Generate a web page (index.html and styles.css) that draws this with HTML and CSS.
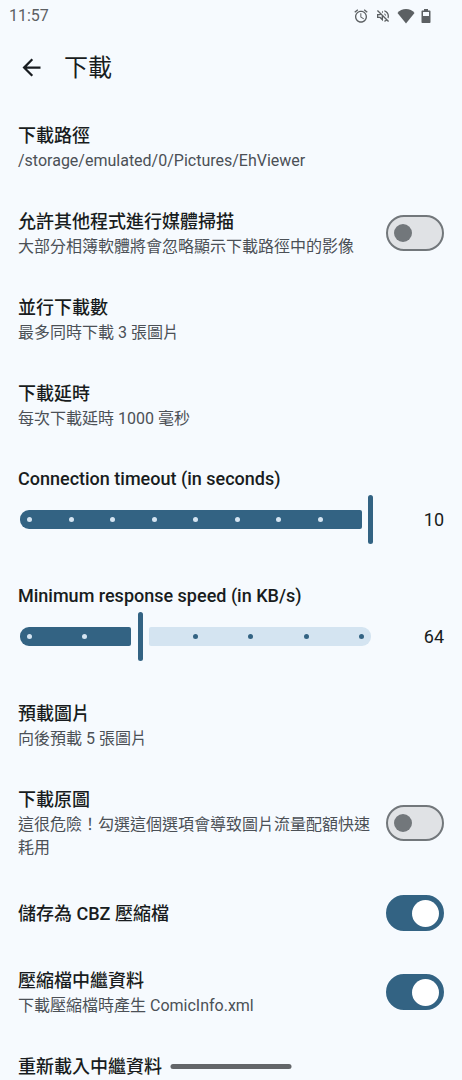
FILE: index.html
```html
<!DOCTYPE html>
<html lang="zh-Hant">
<head>
<meta charset="utf-8">
<meta name="viewport" content="width=device-width, initial-scale=1">
<title>下載</title>
<link rel="stylesheet" href="styles.css">
</head>
<body>
<div class="screen">
  <div class="status-bar">
    <span class="clock">11:57</span>
    <div class="status-icons">
      <svg class="status-icon" viewBox="0 0 24 24" aria-hidden="true"><path d="M22 5.72l-4.6-3.86-1.29 1.53 4.6 3.86L22 5.72zM7.88 3.39L6.6 1.86 2 5.71l1.29 1.53 4.59-3.85zM12.5 8H11v6l4.75 2.85.75-1.23-4-2.37V8zM12 4c-4.97 0-9 4.03-9 9s4.02 9 9 9c4.97 0 9-4.03 9-9s-4.03-9-9-9zm0 16c-3.87 0-7-3.13-7-7s3.13-7 7-7 7 3.13 7 7-3.13 7-7 7z"/></svg>
      <svg class="status-icon" viewBox="0 0 24 24" aria-hidden="true"><path d="M4.34 2.93L2.93 4.34 7.29 8.7 7 9H3v6h4l5 5v-6.59l4.18 4.18c-.65.49-1.38.88-2.18 1.11v2.06a8.94 8.94 0 0 0 3.61-1.75l2.05 2.05 1.41-1.41L4.34 2.93zM10 15.17L7.83 13H5v-2h2.83l.88-.88L10 11.41v3.76zM19 12c0 .82-.15 1.61-.41 2.34l1.53 1.53c.56-1.17.88-2.48.88-3.87 0-4.28-2.99-7.86-7-8.77v2.06c2.89.86 5 3.54 5 6.71zm-7-8l-1.88 1.88L12 7.76V4zm4.500 8A4.500 4.500 0 0 0 14 7.970v1.790l2.480 2.480c.01-.08.02-.16.02-.24z"/></svg>
      <svg class="status-icon wifi" viewBox="0 0 18 16" aria-hidden="true"><path d="M9 15.500L.500 5C2.500 2.500 5.500 1 9 1s6.500 1.500 8.500 4z"/></svg>
      <svg class="status-icon battery" viewBox="0 0 10 16" aria-hidden="true"><path fill-rule="evenodd" d="M3 1h4v1.500h1.500c.6 0 1 .4 1 1V14c0 .6-.4 1-1 1h-7c-.6 0-1-.4-1-1V3.500c0-.6.4-1 1-1H3zM2 4v4h6V4z"/></svg>
    </div>
  </div>

  <header class="app-bar">
    <button class="back" type="button" aria-label="返回">
      <svg class="back-icon" viewBox="0 0 24 24" aria-hidden="true"><path d="M20 11H7.830l5.590-5.590L12 4l-8 8 8 8 1.410-1.410L7.830 13H20z"/></svg>
    </button>
    <h1 class="page-title">下載</h1>
  </header>

  <main class="settings">
    <section class="row">
      <div class="text"><h2 class="title">下載路徑</h2><p class="summary">/storage/emulated/0/Pictures/EhViewer</p></div>
    </section>
    <label class="row">
      <span class="text"><span class="title">允許其他程式進行媒體掃描</span><span class="summary">大部分相簿軟體將會忽略顯示下載路徑中的影像</span></span>
      <input class="switch" type="checkbox" role="switch">
    </label>
    <section class="row">
      <div class="text"><h2 class="title">並行下載數</h2><p class="summary">最多同時下載 3 張圖片</p></div>
    </section>
    <section class="row">
      <div class="text"><h2 class="title">下載延時</h2><p class="summary">每次下載延時 1000 毫秒</p></div>
    </section>

    <section class="slider-row">
      <label class="title" for="timeout">Connection timeout (in seconds)</label>
      <div class="slider-line">
        <div class="slider">
          <div class="track">
            <span class="active" style="--position: 100%"></span>
          </div>
          <div class="ticks">
            <i class="tick"></i><i class="tick"></i><i class="tick"></i><i class="tick"></i><i class="tick"></i><i class="tick"></i><i class="tick"></i><i class="tick"></i><i class="tick covered"></i>
          </div>
          <input class="range" id="timeout" type="range" min="2" max="10" value="10">
        </div>
        <output class="value" for="timeout">10</output>
      </div>
    </section>

    <section class="slider-row">
      <label class="title" for="speed">Minimum response speed (in KB/s)</label>
      <div class="slider-line">
        <div class="slider">
          <div class="track">
            <span class="active" style="--position: 34.2%"></span>
            <span class="inactive"></span>
          </div>
          <div class="ticks">
            <i class="tick"></i><i class="tick"></i><i class="tick covered"></i><i class="tick off"></i><i class="tick off"></i><i class="tick off"></i><i class="tick off"></i>
          </div>
          <input class="range" id="speed" type="range" min="0" max="187" value="64">
        </div>
        <output class="value" for="speed">64</output>
      </div>
    </section>

    <section class="row">
      <div class="text"><h2 class="title">預載圖片</h2><p class="summary">向後預載 5 張圖片</p></div>
    </section>
    <label class="row">
      <span class="text"><span class="title">下載原圖</span><span class="summary">這很危險！勾選這個選項會導致圖片流量配額快速耗用</span></span>
      <input class="switch" type="checkbox" role="switch">
    </label>
    <label class="row">
      <span class="text"><span class="title">儲存為 CBZ 壓縮檔</span></span>
      <input class="switch" type="checkbox" role="switch" checked>
    </label>
    <label class="row">
      <span class="text"><span class="title">壓縮檔中繼資料</span><span class="summary">下載壓縮檔時產生 ComicInfo.xml</span></span>
      <input class="switch" type="checkbox" role="switch" checked>
    </label>
    <section class="row">
      <div class="text"><h2 class="title">重新載入中繼資料</h2></div>
    </section>
  </main>
  <div class="gesture-bar"></div>
</div>
</body>
</html>
```
FILE: styles.css
```css
:root {
  --surface: #f6fafe;
  --primary: #336383;
  --primary-soft: #d4e4f1;
  --ink: #181c20;
  --ink-soft: #4b5056;
  --outline: #72777b;
}

* {
  box-sizing: border-box;
}

body {
  margin: 0;
  background: var(--surface);
  color: var(--ink);
  font-family: Roboto, "Noto Sans CJK TC", sans-serif;
}

.screen {
  position: relative;
  display: flex;
  flex-direction: column;
  height: 100vh;
  overflow: hidden;
}

.status-bar {
  display: flex;
  flex: none;
  align-items: center;
  justify-content: space-between;
  height: 31px;
  padding: 0 31px 0 9px;
  color: #5c6063;
}

.clock {
  font-size: 16px;
  line-height: 21px;
}

.status-icons {
  display: flex;
  align-items: center;
  gap: 6px;
}

.status-icon {
  width: 16px;
  height: 16px;
  fill: currentColor;
}

.wifi {
  width: 18px;
}

.battery {
  width: 10px;
}

.app-bar {
  display: flex;
  flex: none;
  align-items: center;
  gap: 11px;
  height: 73px;
  padding: 0 10px;
}

.back {
  display: grid;
  place-items: center;
  width: 43px;
  height: 45px;
  padding: 0;
  border: 0;
  background: none;
  color: inherit;
}

.back-icon {
  width: 27px;
  height: 27px;
  fill: currentColor;
}

.page-title {
  margin: 0;
  font-size: 24px;
  font-weight: 400;
  line-height: 34px;
}

.settings {
  flex: 1;
  min-height: 0;
  overflow-y: auto;
  scrollbar-width: none;
}

.row {
  display: flex;
  align-items: center;
  gap: 16px;
  padding: 18px;
}

.text {
  flex: 1;
  min-width: 0;
}

.title {
  display: block;
  margin: 0;
  font-size: 18px;
  font-weight: 500;
  line-height: 27px;
}

.summary {
  display: block;
  margin: 0;
  color: var(--ink-soft);
  font-size: 16px;
  line-height: 23px;
}

.switch {
  appearance: none;
  display: flex;
  flex: none;
  align-items: center;
  width: 58px;
  height: 36px;
  margin: 0;
  padding: 0 6px;
  border: 2px solid var(--outline);
  border-radius: 18px;
  background: #e0e2e5;
}

.switch::before {
  content: "";
  width: 18px;
  height: 18px;
  border-radius: 50%;
  background: var(--outline);
}

.switch:checked {
  justify-content: flex-end;
  padding: 0 3px;
  border-color: var(--primary);
  background: var(--primary);
}

.switch:checked::before {
  width: 27px;
  height: 27px;
  background: #fff;
}

.slider-row {
  padding: 17px 18px 21px;
}

.slider-line {
  display: flex;
  align-items: center;
  padding-top: 3px;
}

.slider {
  position: relative;
  flex: 1;
  height: 49px;
}

.track {
  display: flex;
  align-items: center;
  gap: 18px;
  height: 49px;
  padding: 0 2px;
}

.active,
.inactive {
  height: 19px;
}

.active {
  flex: none;
  width: calc(var(--position) - 9px);
  border-radius: 9px 2px 2px 9px;
  background: var(--primary);
}

.inactive {
  flex: 1;
  border-radius: 2px 9px 9px 2px;
  background: var(--primary-soft);
}

.ticks {
  position: absolute;
  inset: 0;
  display: flex;
  align-items: center;
  justify-content: space-between;
  padding: 0 9px;
}

.tick {
  width: 5px;
  height: 5px;
  border-radius: 50%;
  background: var(--primary-soft);
}

.tick.off {
  background: var(--primary);
}

.tick.covered {
  visibility: hidden;
}

.range {
  appearance: none;
  position: absolute;
  inset: 0;
  width: 100%;
  height: 49px;
  margin: 0;
  background: none;
}

.range::-webkit-slider-runnable-track {
  height: 49px;
}

.range::-webkit-slider-thumb {
  appearance: none;
  width: 5px;
  height: 49px;
  border-radius: 3px;
  background: var(--primary);
}

.value {
  width: 71px;
  font-size: 18px;
  line-height: 27px;
  text-align: right;
}

.gesture-bar {
  position: absolute;
  bottom: 11px;
  left: 50%;
  width: 121px;
  height: 5px;
  border-radius: 3px;
  background: #636669;
  transform: translateX(-50%);
}
```
